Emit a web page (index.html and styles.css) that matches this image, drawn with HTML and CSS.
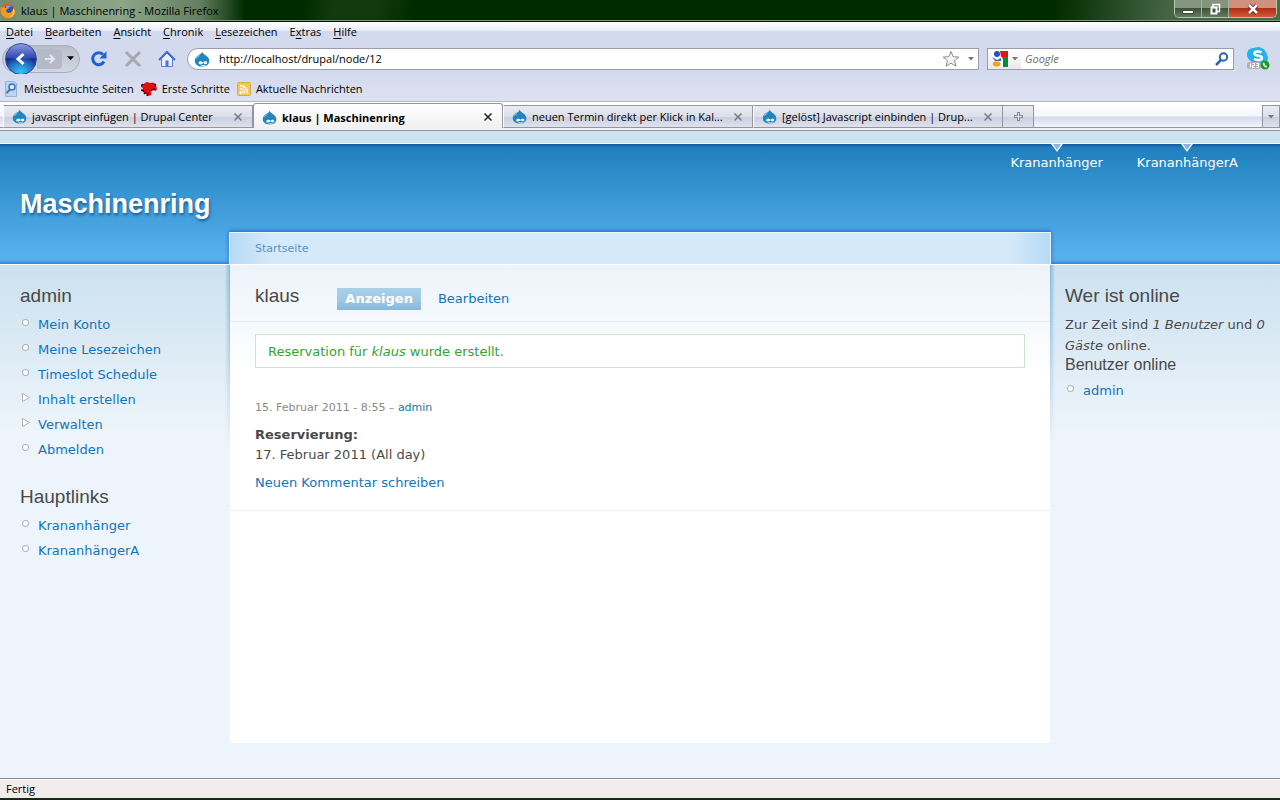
FILE: index.html
```html
<!DOCTYPE html>
<html lang="de">
<head>
    <meta charset="UTF-8">
    <meta name="viewport" content="width=device-width, initial-scale=1.0">
    <title>klaus | Maschinenring</title>
    <link rel="stylesheet" href="styles.css">
</head>
<body>
    <!-- Shared icons -->
    <svg class="sprite" aria-hidden="true">
        <symbol id="drop" viewBox="0 0 16 16">
            <path d="M8.200 .5C8.500 2.600 10 3.200 11.500 4.200 14 5.800 15.300 7.600 15.300 10c0 3.300-3 5.500-7.100 5.500S.8 13.200.8 9.900c0-2.600 1.700-4.400 4-5.800C6.700 3 7.700 2.300 8.200.5z" fill="#1f86c0"/>
            <path d="M2 8c.3-1.700 1.800-3.200 4-4-.8 1.600-2 2.400-4 4z" fill="#8ccbea"/>
            <path d="M4.600 12c0-1.200 1-1.700 2-1.700 1.100 0 1.700.6 2.500 1.200.8-.6 1.500-1.200 2.500-1.200.9 0 1.500.5 1.500 1.400s-.7 1.500-1.600 1.500c-1 0-1.600-.7-2.400-1.100-.7.700-1.500 1.300-2.500 1.300s-2-.3-2-1.400z" fill="#fff"/>
            <path d="M7 14.300c1.200.7 2.800.7 4 0" fill="none" stroke="#fff"/>
        </symbol>
        <symbol id="cross" viewBox="0 0 10 10">
            <path d="M1.500 1.500l7 7M8.500 1.500l-7 7" fill="none" stroke="currentColor" stroke-width="1.500"/>
        </symbol>
        <symbol id="arrow" viewBox="0 0 6 4">
            <path d="M0 0h6L3 3.500z" fill="currentColor"/>
        </symbol>
    </svg>

    <header class="titlebar">
        <svg class="firefox" viewBox="0 0 16 16">
            <circle cx="8" cy="8" r="7.500" fill="#e06a14"/>
            <circle cx="9" cy="7" r="5" fill="#2a57a8"/>
            <path d="M6 3c2-1.500 5-1 6 1-2-.5-3 0-3 1s-2 1-3 0z" fill="#6fa6df"/>
            <path d="M1 3c0 1 .5 1.500 1 2 1-.8 2-.8 3-.3 1 .4 2 .3 3 .8-.5 1-1.700 1.200-2 2 .2 2 2.500 3 4.500 2 1.700-1 2.500-2.500 2.500-4.500 1 1 2 3 1.500 5.500-1 3-3.500 4.500-6.500 4.500C4 15 .8 12 .7 8 .6 6 .5 4.500 1 3z" fill="#f39a24"/>
            <path d="M13 5c1 1 2 2.500 1.500 5-1 3-4 5-7 4.500 4-.5 6.500-4 5.500-9.500z" fill="#ffd84a"/>
        </svg>
        <span class="window-title">klaus | Maschinenring - Mozilla Firefox</span>
        <div class="window-buttons">
            <button type="button" aria-label="Minimieren"><svg width="12" height="12"><path d="M.5 7.500h11v3H.5z" fill="#fff" stroke="#444"/></svg></button>
            <button type="button" aria-label="Verkleinern"><svg width="12" height="12"><path d="M4 4V1.500h6.500v7H8" fill="none" stroke="#fff" stroke-width="1.500"/><path d="M2.500 4.500h5v6h-5z" fill="#465346" stroke="#fff" stroke-width="2"/></svg></button>
            <button type="button" class="close" aria-label="Schließen"><svg width="12" height="12"><path d="M2 2l8 8M10 2l-8 8" stroke="#5a1a10" stroke-width="4"/><path d="M2 2l8 8M10 2l-8 8" stroke="#fff" stroke-width="2.500"/></svg></button>
        </div>
    </header>

    <nav class="menubar">
        <button type="button"><u>D</u>atei</button>
        <button type="button"><u>B</u>earbeiten</button>
        <button type="button"><u>A</u>nsicht</button>
        <button type="button"><u>C</u>hronik</button>
        <button type="button"><u>L</u>esezeichen</button>
        <button type="button">E<u>x</u>tras</button>
        <button type="button"><u>H</u>ilfe</button>
    </nav>

    <div class="navbar">
        <div class="history">
            <button type="button" class="back" aria-label="Zurück"><svg width="16" height="16"><path d="M10.500 3L5 8l5.500 5" fill="none" stroke="#fff" stroke-width="3"/></svg></button>
            <button type="button" class="forward" aria-label="Vor"><svg width="14" height="14"><path d="M2 7h8M7 3l4 4-4 4" fill="none" stroke="#e6e8ee" stroke-width="2"/></svg></button>
            <button type="button" aria-label="Verlauf"><svg width="7" height="5"><use href="#arrow"/></svg></button>
        </div>
        <button type="button" class="tool" aria-label="Neu laden"><svg width="18" height="18"><path d="M14 11.500A6 6 0 1 1 13 4.500" fill="none" stroke="#1f63d2" stroke-width="3"/><path d="M16.500 1v7.500H9.500z" fill="#1f63d2"/></svg></button>
        <button type="button" class="tool" aria-label="Stopp"><svg width="18" height="18"><path d="M2 2l14 14M16 2L2 16" stroke="#a6a8af" stroke-width="3"/></svg></button>
        <button type="button" class="tool" aria-label="Startseite"><svg width="18" height="18"><path d="M3.500 8.500v8h11v-8L9 3z" fill="#e9f0fc" stroke="#5581cf"/><path d="M1 10l8-8 8 8" fill="none" stroke="#3e6fc9" stroke-width="2"/><path d="M7.500 10.500h3v6h-3z" fill="#4a78c8"/></svg></button>
        <div class="urlbar">
            <svg class="site-icon"><use href="#drop"/></svg>
            <input type="text" aria-label="Adresse" value="http://localhost/drupal/node/12">
            <button type="button" aria-label="Lesezeichen hinzufügen"><svg width="18" height="18"><path d="M9 1.500l2.200 5.200 5.600.4-4.300 3.600 1.400 5.500L9 13.200l-4.900 3 1.400-5.500L1.200 7.100l5.600-.4z" fill="#f4f4f4" stroke="#8b8b8b"/></svg></button>
            <button type="button" class="drop-arrow" aria-label="Adressliste"><svg width="6" height="4"><use href="#arrow"/></svg></button>
        </div>
        <div class="searchbar">
            <button type="button" class="engine" aria-label="Suchmaschine">
                <svg width="16" height="16"><path d="M0 0h16v16H0z" fill="#fff"/><path d="M8 0h8v6H9z" fill="#e1141e"/><path d="M10 6h6v10h-5V9z" fill="#11883a"/><circle cx="5" cy="3" r="3" fill="#2653b4"/><path d="M0 6l5 3 4-2v3H3z" fill="#3a66c4"/><ellipse cx="4.500" cy="13" rx="4" ry="2.800" fill="#f0a51c"/></svg>
                <svg width="6" height="4"><use href="#arrow"/></svg>
            </button>
            <input type="search" aria-label="Suche" placeholder="Google">
            <button type="button" aria-label="Suchen"><svg width="14" height="14"><circle cx="8.500" cy="5" r="3.700" fill="none" stroke="#2d66b0" stroke-width="2"/><path d="M6 8l-5 5" stroke="#2d66b0" stroke-width="2.500"/></svg></button>
        </div>
        <button type="button" class="skype" aria-label="Skype"><svg width="24" height="24"><rect x="1" y="1" width="14" height="13" rx="6" fill="#24b3ea"/><circle cx="12" cy="9" r="9" fill="#24b3ea"/><circle cx="16" cy="11" r="6" fill="#24b3ea"/><path d="M15.500 5.500C13 3.800 8.500 4 8.500 6.500c0 3 7.500 1.500 7.500 4.500 0 2.500-5 2.800-8 .8" fill="none" stroke="#fff" stroke-width="2.500"/><rect x="1" y="15" width="14" height="7" rx="2" fill="#b1b3b6"/><path d="M4.500 16.500v4M6.500 16.500h2v2h-2v2h2M10.500 16.500h2v4h-2M10.500 18.500h2" fill="none" stroke="#fff"/><circle cx="19" cy="18" r="4.500" fill="#229d22"/><path d="M17.500 15.800c0 2 1 3.500 3.200 4.200" fill="none" stroke="#fff" stroke-width="1.500"/></svg></button>
    </div>

    <nav class="bookmarks">
        <a href="#"><svg width="16" height="16"><path d="M2.500.5h9l2 2v13h-11z" fill="#b9d5f1" stroke="#91b5dc"/><circle cx="9" cy="6" r="3" fill="#dcecfb" stroke="#3f73b5" stroke-width="1.500"/><path d="M7 8.500L3.500 12" stroke="#3f73b5" stroke-width="2"/></svg>Meistbesuchte Seiten</a>
        <a href="#"><svg width="16" height="16"><path d="M1 4l3-2 2-1 3 1 3-.5 3 2.500 1 4-1 2-3-1-2 1 .5 4L7 15l-2-2-2-1-2-3 1-2-2-1z" fill="#e01010"/><path d="M0 5l2-2M0 9l3 1M3 13l2-2M6 15l1-3M10 9l4-1M13 3l2 1" stroke="#300" stroke-width="1.500"/></svg>Erste Schritte</a>
        <a href="#"><svg width="14" height="14"><rect x=".5" y=".5" width="13" height="13" rx="1" fill="#f7c65a" stroke="#e0a840"/><circle cx="4" cy="10.500" r="1.500" fill="#fff"/><path d="M3 6.500a4.500 4.500 0 0 1 4.500 5M3 3.500a7.500 7.500 0 0 1 7.500 8" fill="none" stroke="#fff" stroke-width="1.500"/></svg>Aktuelle Nachrichten</a>
    </nav>

    <div class="tabstrip">
        <div class="tab">
            <svg class="tab-icon"><use href="#drop"/></svg>
            <button type="button" class="tab-title">javascript einfügen | Drupal Center</button>
            <button type="button" class="tab-close" aria-label="Tab schließen"><svg width="10" height="10"><use href="#cross"/></svg></button>
        </div>
        <div class="tab active">
            <svg class="tab-icon"><use href="#drop"/></svg>
            <button type="button" class="tab-title">klaus | Maschinenring</button>
            <button type="button" class="tab-close" aria-label="Tab schließen"><svg width="10" height="10"><use href="#cross"/></svg></button>
        </div>
        <div class="tab">
            <svg class="tab-icon"><use href="#drop"/></svg>
            <button type="button" class="tab-title">neuen Termin direkt per Klick in Kal...</button>
            <button type="button" class="tab-close" aria-label="Tab schließen"><svg width="10" height="10"><use href="#cross"/></svg></button>
        </div>
        <div class="tab">
            <svg class="tab-icon"><use href="#drop"/></svg>
            <button type="button" class="tab-title">[gelöst] Javascript einbinden | Drup...</button>
            <button type="button" class="tab-close" aria-label="Tab schließen"><svg width="10" height="10"><use href="#cross"/></svg></button>
        </div>
        <button type="button" class="new-tab" aria-label="Neuer Tab"><svg width="9" height="9"><path d="M4.500 0v9M0 4.500h9" stroke="#85878f" stroke-width="3"/><path d="M4.500 1v7M1 4.500h7" stroke="#e4e5ea"/></svg></button>
        <button type="button" class="all-tabs" aria-label="Alle Tabs"><svg width="6" height="4"><use href="#arrow"/></svg></button>
    </div>

    <!-- Drupal page -->
    <div class="site">
        <header class="site-header">
            <h1 class="site-name"><a href="#">Maschinenring</a></h1>
            <nav class="primary-links">
                <a href="#"><svg width="12" height="8"><path d="M0 0h12L6 8z" fill="#e8f2fb"/><path d="M2 0h8L6 6z" fill="#8fb4dc"/></svg>Krananhänger</a>
                <a href="#"><svg width="12" height="8"><path d="M0 0h12L6 8z" fill="#e8f2fb"/><path d="M2 0h8L6 6z" fill="#8fb4dc"/></svg>KrananhängerA</a>
            </nav>
            <div class="breadcrumb"><a href="#">Startseite</a></div>
        </header>

        <div class="columns">
            <aside class="sidebar left">
                <h2>admin</h2>
                <ul class="menu">
                    <li><a href="#">Mein Konto</a></li>
                    <li><a href="#">Meine Lesezeichen</a></li>
                    <li><a href="#">Timeslot Schedule</a></li>
                    <li class="collapsed"><a href="#">Inhalt erstellen</a></li>
                    <li class="collapsed"><a href="#">Verwalten</a></li>
                    <li><a href="#">Abmelden</a></li>
                </ul>
                <h2>Hauptlinks</h2>
                <ul class="menu">
                    <li><a href="#">Krananhänger</a></li>
                    <li><a href="#">KrananhängerA</a></li>
                </ul>
            </aside>

            <main class="content">
                <div class="node-head">
                    <h2>klaus</h2>
                    <a href="#" class="task active">Anzeigen</a>
                    <a href="#" class="task">Bearbeiten</a>
                </div>
                <div class="node">
                    <div class="status">Reservation für <em>klaus</em> wurde erstellt.</div>
                    <p class="submitted">15. Februar 2011 - 8:55 – <a href="#">admin</a></p>
                    <p class="field"><strong>Reservierung:</strong><br>17. Februar 2011 (All day)</p>
                    <p class="node-links"><a href="#">Neuen Kommentar schreiben</a></p>
                </div>
            </main>

            <aside class="sidebar right">
                <h2>Wer ist online</h2>
                <p>Zur Zeit sind <em>1 Benutzer</em> und <em>0 Gäste</em> online.</p>
                <h3>Benutzer online</h3>
                <ul class="menu">
                    <li><a href="#">admin</a></li>
                </ul>
            </aside>
        </div>
    </div>

    <footer class="statusbar">Fertig</footer>
</body>
</html>
```
FILE: styles.css
```css
* {
    box-sizing: border-box;
}
body {
    margin: 0;
    min-height: 100vh;
    display: flex;
    flex-direction: column;
    font-family: "Open Sans", "Noto Sans", sans-serif;
    font-size: 11px;
    color: #000;
    background: #d3daed;
}
button {
    margin: 0;
    padding: 0;
    border: 0;
    background: none;
    font: inherit;
    color: inherit;
    display: flex;
    align-items: center;
    justify-content: center;
}
button u {
    text-underline-offset: 2px;
}
a {
    text-decoration: none;
}
svg {
    display: block;
    flex: none;
}
.sprite {
    display: none;
}

/* Window title */
.titlebar {
    display: flex;
    align-items: center;
    height: 22px;
    border-bottom: 1px solid #081408;
    box-shadow: inset 0 -1px #7d957b;
    background:
        linear-gradient(90deg, #71906d 0, #8da68a 120px, #638060 200px, rgba(0, 44, 0, 0) 245px),
        linear-gradient(100deg, #002b00 300px, #123a10 330px, #123a10 370px, #002b00 410px, #002b00 1040px, #456442 1150px, #4c6b48 1280px);
}
.firefox {
    width: 16px;
    height: 16px;
}
.window-title {
    flex: 1;
    padding-left: 5px;
}
.window-buttons {
    display: flex;
    align-self: flex-start;
    margin-right: 3px;
    height: 18px;
    border: 1px solid #b4c4b2;
    border-top: 0;
    border-radius: 0 0 5px 5px;
    overflow: hidden;
}
.window-buttons button {
    width: 27px;
    border-right: 1px solid #a3b3a1;
    background: linear-gradient(#84947f 50%, #3d5439 50%, #647b60);
}
.window-buttons .close {
    width: 47px;
    border: 0;
    background: linear-gradient(#d0907e 45%, #b02e16 50%, #d3593a);
}

/* Browser toolbars */
.menubar {
    display: flex;
    gap: 12px;
    height: 21px;
    padding: 0 6px 2px;
    background: linear-gradient(#fff, #e6ebf6 9px, #d3daed 9px);
}
.navbar {
    display: flex;
    align-items: center;
    height: 31px;
    padding: 0 10px 0 2px;
}
.history {
    display: flex;
    align-items: center;
    width: 78px;
    height: 28px;
    border: 1px solid #a9aebd;
    border-radius: 14px;
    background: linear-gradient(#b8bdca, #d3d7e2);
}
.back {
    width: 32px;
    height: 32px;
    margin-left: 2px;
    border: 1px solid #3a4a8c;
    border-radius: 50%;
    background: radial-gradient(circle at 50% 95%, #35c4f5, rgba(40, 130, 220, 0) 55%), linear-gradient(#8a9be0, #3548b4 45%, #142a92 50%, #1d65c4);
}
.forward {
    width: 25px;
    height: 20px;
    margin-right: 5px;
    border-radius: 0 4px 4px 0;
    background: #b5bac8;
}
.tool {
    width: 18px;
    margin-left: 16px;
}
.history + .tool {
    margin-left: 10px;
}
.urlbar,
.searchbar {
    display: flex;
    align-items: center;
    height: 22px;
    border: 1px solid #9a9cab;
    background: #fff;
}
.urlbar {
    flex: 1;
    margin-left: 11px;
    border-radius: 11px 0 0 11px;
}
.urlbar input,
.searchbar input {
    flex: 1;
    min-width: 0;
    padding: 0;
    border: 0;
    outline: 0;
    background: none;
    font: inherit;
    color: #000;
}
.urlbar input {
    padding-left: 9px;
}
.site-icon {
    width: 16px;
    height: 16px;
    margin-left: 6px;
}
.drop-arrow {
    width: 18px;
    padding-left: 3px;
    color: #777;
}
.searchbar {
    width: 247px;
    margin-left: 8px;
    padding-right: 4px;
}
.engine {
    gap: 4px;
    width: 33px;
    height: 20px;
    color: #777;
    background: linear-gradient(#fff, #e9e9ec);
}
.searchbar input {
    padding-left: 4px;
}
.searchbar input::placeholder {
    font-style: italic;
    color: #707070;
    opacity: 1;
}
.skype {
    margin-left: 12px;
}
.bookmarks {
    display: flex;
    align-items: center;
    gap: 7px;
    height: 28px;
    padding: 2px 3px 0;
    border-bottom: 1px solid #b0b5ca;
    background: linear-gradient(#d3daed, #dde2f2);
}
.bookmarks a {
    display: flex;
    align-items: center;
    gap: 5px;
    color: #000;
}

/* Tabs */
.tabstrip {
    display: flex;
    align-items: flex-end;
    height: 29px;
    padding: 2px 0 2px 3px;
    border-bottom: 1px solid #94969f;
    background: linear-gradient(#fff 2px, #f4f6fd 14px, #d5daec 15px, #f2f4fb 25px, #94969f 25px, #94969f 26px, #f2f2f2 26px);
}
.tab {
    display: flex;
    align-items: center;
    flex: 0 1 250px;
    min-width: 0;
    height: 23px;
    padding: 0 9px 0 8px;
    border: 1px solid #94969f;
    border-left-color: #fff;
    background: linear-gradient(#ebecf2, #dcdee8 50%, #c9cde0 50%, #dfe1ec);
}
.tab.active {
    height: 25px;
    padding-top: 2px;
    border-bottom: 0;
    border-left-color: #94969f;
    border-radius: 3px 3px 0 0;
    background: linear-gradient(#fff, #f0f0f0);
    font-weight: bold;
}
.tab-icon {
    width: 15px;
    height: 15px;
}
.tab-title {
    flex: 1;
    min-width: 0;
    padding-left: 5px;
    justify-content: flex-start;
    white-space: nowrap;
    overflow: hidden;
}
.tab-close {
    color: #777b86;
}
.active .tab-close {
    color: #222;
}
.new-tab,
.all-tabs {
    width: 31px;
    height: 23px;
    border: 1px solid #94969f;
    border-left: 0;
    background: linear-gradient(#ebecf2, #dcdee8 50%, #c9cde0 50%, #dfe1ec);
}
.all-tabs {
    width: 18px;
    margin-left: auto;
    border-left: 1px solid #94969f;
    color: #777;
}

/* Site */
.site {
    flex: 1;
    display: flex;
    flex-direction: column;
    padding-top: 12px;
    font-family: "DejaVu Sans", Verdana, sans-serif;
    font-size: 13px;
    line-height: 20px;
    color: #494949;
    background: #cee3f1;
}
.site a {
    color: #0f75be;
}
.site h1,
.site h2,
.site h3,
.site p {
    margin: 0;
    font-family: "Liberation Sans", Arial, sans-serif;
    font-weight: normal;
}
.site p {
    font-family: inherit;
}
.site h2 {
    font-size: 19px;
    line-height: 24px;
}
.site h3 {
    font-size: 16px;
    line-height: 18px;
}
.site-header {
    display: grid;
    grid-template-columns: 230px 1fr 230px;
    grid-template-rows: 88px 32px;
    border-top: 1px solid #fff;
    background: linear-gradient(#1459a0, #2180c0 4px, #2686c3 15px, #57b1ed 112px, #55b0ee 116px, #2f84dc);
}
.site .site-name {
    align-self: end;
    padding: 0 0 12px 20px;
    font-size: 27px;
    font-weight: bold;
    line-height: 32px;
}
.site-name a {
    color: #fff;
    text-shadow: 1px 2px 3px #1a5a96;
}
.primary-links {
    grid-column: 2 / 4;
    display: flex;
    justify-content: flex-end;
    gap: 34px;
    padding-right: 42px;
}
.primary-links a {
    display: flex;
    flex-direction: column;
    align-items: center;
    gap: 1px;
}
.site .primary-links a {
    color: #fff;
}
.breadcrumb {
    grid-column: 2;
    margin: 0 -1px;
    padding: 7px 25px 0;
    border: 1px solid #eef8ff;
    border-bottom: 0;
    font-size: 11px;
    line-height: 18px;
    background: linear-gradient(90deg, #b5daf5, #d5eaf9 42px, #d5eaf9 calc(100% - 42px), #b5daf5);
    box-shadow: 0 -1px 4px #1865cd;
    clip-path: inset(-6px -6px 0);
}
.site .breadcrumb a {
    color: #5294cd;
}
.columns {
    flex: 1;
    display: grid;
    grid-template-columns: 230px 1fr 230px;
    border-top: 1px solid #fff;
    background: linear-gradient(#cbe1ef, #edf4fb 165px);
}
.sidebar {
    padding: 19px 20px 0;
}
.sidebar.right {
    padding: 19px 15px 0;
}
.sidebar.right p {
    padding-top: 6px;
    line-height: 21px;
}
.menu {
    margin: 0;
    padding: 4px 0 23px;
    list-style: none;
    line-height: 25px;
}
.menu li {
    padding-left: 18px;
    background: radial-gradient(circle, #fff 2px, #b0b3b5 3px, rgba(176, 179, 181, 0) 4px) 1px 6px / 9px 9px no-repeat;
}
.menu .collapsed {
    background: url("data:image/svg+xml,%3Csvg xmlns='http://www.w3.org/2000/svg' width='8' height='9'%3E%3Cpath d='M.5.5v8l7-4z' fill='%23fff' stroke='%23b0b3b5'/%3E%3C/svg%3E") 2px 6px no-repeat;
}
.content {
    position: relative;
    margin-bottom: 35px;
    background: linear-gradient(#ecf3fa, #fff 110px);
}
/* Shadow beside the panel, fades out downwards */
.content::before,
.content::after {
    content: "";
    position: absolute;
    top: 0;
    width: 5px;
    height: 180px;
    mask-image: linear-gradient(#000, transparent);
}
.content::before {
    right: 100%;
    background: linear-gradient(90deg, rgba(110, 170, 210, 0), #82b6d8);
}
.content::after {
    left: 100%;
    background: linear-gradient(270deg, rgba(110, 170, 210, 0), #82b6d8);
}
.node-head {
    display: flex;
    align-items: center;
    height: 57px;
    padding: 12px 25px 0;
    border-bottom: 1px solid #e4edf3;
}
.node-head h2 {
    margin: 0 38px 6px 0;
}
.task {
    padding: 0 8px;
    line-height: 22px;
}
.site .task.active {
    margin-right: 9px;
    font-weight: bold;
    color: #fff;
    background: linear-gradient(#a9d0e9, #9dc7e4 60%, #85b8dc);
}
.node {
    padding: 12px 25px 17px;
    border-bottom: 1px solid #e9eff3;
}
.status {
    padding: 7px 12px 5px;
    border: 1px solid #c7e8c9;
    color: #33a333;
    background: #fff;
}
.submitted {
    padding-top: 30px;
    font-size: 11px;
    color: #898989;
}
.field {
    padding-top: 7px;
}
.node-links {
    padding-top: 8px;
}

.statusbar {
    height: 22px;
    padding-left: 6px;
    border-top: 1px solid #8d8d92;
    border-bottom: 2px solid #122b12;
    line-height: 20px;
    background: #f0edec;
    box-shadow: inset 0 1px #fff;
}
```
